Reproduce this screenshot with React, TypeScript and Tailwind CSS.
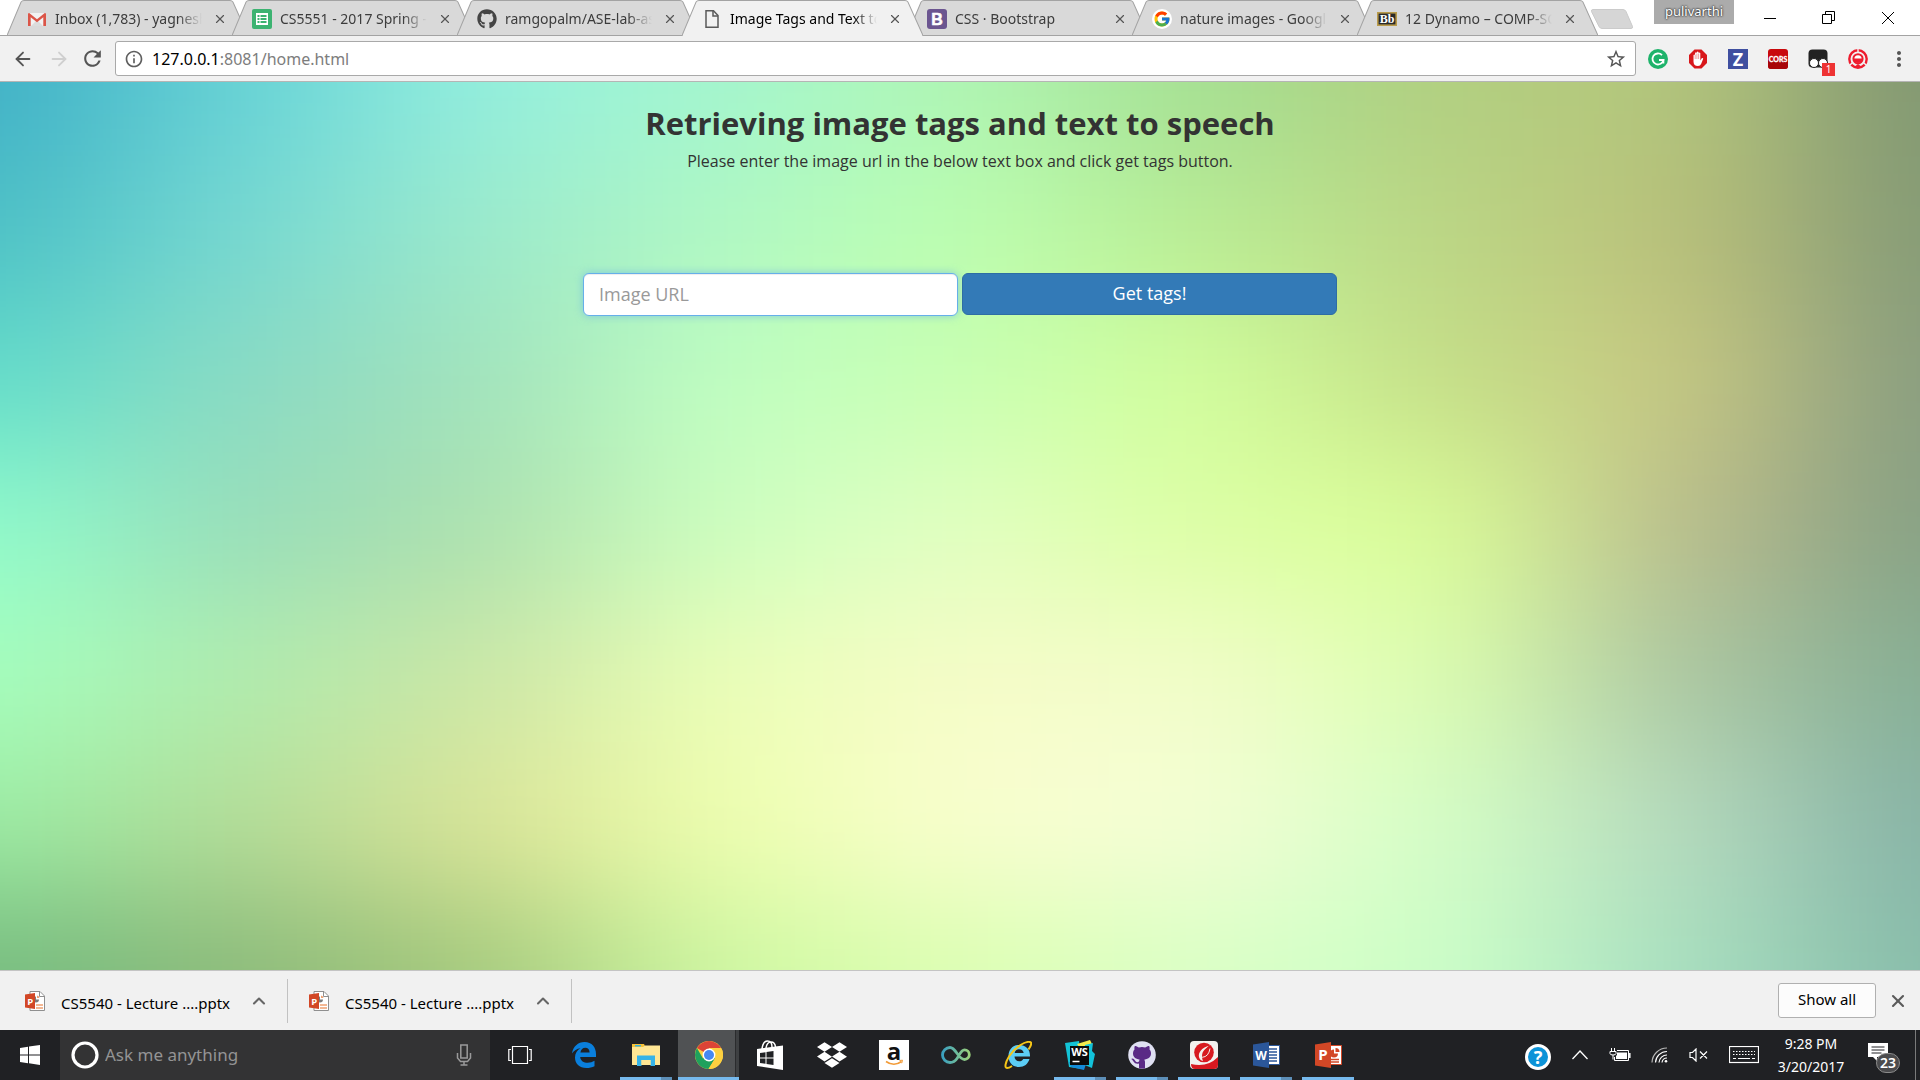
import type { ReactNode } from 'react';
import { ArrowLeft, ArrowRight, ChevronUp, X } from 'lucide-react';
import { FaDropbox, FaGithub } from 'react-icons/fa';
import { FcGoogle } from 'react-icons/fc';
import { MdRefresh, MdInfoOutline, MdStarBorder, MdMoreVert } from 'react-icons/md';

/* ---------- backdrop ---------- */

const MESH = [
  ['#40b0c6', '#66d2d6', '#94efdf', '#a4f6cf', '#b0f6b4', '#a4df92', '#b2cf80', '#b4c67c', '#809672'],
  ['#4cc0c6', '#76d8d2', '#9ceacc', '#b0f8c4', '#bcffb0', '#b8ec94', '#bcd685', '#bac07a', '#849a76'],
  ['#62dcca', '#8adac4', '#a2e2bc', '#c0ffc2', '#c8ffb2', '#d2ff9c', '#c4de88', '#c8c882', '#889c80'],
  ['#90fccc', '#98dcba', '#ace0ae', '#ccffc0', '#e2ffc2', '#dcffa4', '#daff98', '#bcbc8c', '#86a084'],
  ['#a6ffbe', '#b0ecae', '#cce6a6', '#ebffb8', '#f6fcc8', '#f2fdca', '#dcffb0', '#acc6a2', '#86ae94'],
  ['#9ceca4', '#b4dc98', '#dce498', '#eeffae', '#fafed0', '#f5fed6', '#d4ffc6', '#b6dabe', '#86b2a6'],
  ['#76bc80', '#8cba7a', '#a4c87c', '#cef8a2', '#dcffb2', '#daffc6', '#ccffc8', '#a8e0c0', '#88bcaa'],
];

function Backdrop() {
  return (
    <svg className="absolute inset-0 h-full w-full" viewBox="0 0 800 600" preserveAspectRatio="none" aria-hidden="true">
      <filter id="mesh" filterUnits="userSpaceOnUse" x="-250" y="-250" width="1300" height="1100" colorInterpolationFilters="sRGB">
        <feGaussianBlur stdDeviation="40" />
      </filter>
      <g filter="url(#mesh)">
        {MESH.map((row, r) =>
          row.map((fill, c) => {
            const x = c === 0 ? -250 : c * 100 - 50;
            const y = r === 0 ? -250 : r * 100 - 50;
            const right = c === 8 ? 1050 : c * 100 + 51;
            const bottom = r === 6 ? 850 : r * 100 + 51;
            return <rect key={`${r}-${c}`} x={x} y={y} width={right - x} height={bottom - y} fill={fill} />;
          }),
        )}
      </g>
    </svg>
  );
}

/* ---------- favicons ---------- */

const Gmail = () => (
  <svg viewBox="0 0 20 20" className="size-5">
    <rect x="1" y="4" width="18" height="13" rx="1" fill="#f2f2f2" />
    <path d="M4 17 10 11l6 6z" fill="#dcdcdc" />
    <path d="M1 17V5.200C1 4.500 1.500 4 2.200 4L10 10.300 17.800 4c.7 0 1.200.5 1.200 1.200V17h-2.700V8.300L10 13.300 3.700 8.300V17z" fill="#db5548" />
  </svg>
);

const Sheets = () => (
  <svg viewBox="0 0 20 20" className="size-5">
    <rect width="20" height="20" rx="2" fill="#3cb371" />
    <path d="M4 4h12v12H4z" fill="#fff" />
    <path d="M5.500 6h2v2h-2zM8.500 6h6v2h-6zM5.500 9h2v2h-2zM8.500 9h6v2h-6zM5.500 12h2v2h-2zM8.500 12h6v2h-6z" fill="#3cb371" />
  </svg>
);

const Page = () => (
  <svg viewBox="0 0 20 20" className="size-5" fill="none" stroke="#5a5a5a" strokeWidth="1.500">
    <path d="M4 1.800h7.500L16 6.500v11.700H4z" />
    <path d="M11 2v5h5" />
  </svg>
);

const Bootstrap = () => (
  <svg viewBox="0 0 20 20" className="size-5">
    <rect width="20" height="20" rx="3" fill="#6b5590" />
    <text x="10" y="15.800" textAnchor="middle" fontSize="16" fontWeight="700" fontFamily="Liberation Sans" fill="#fff" stroke="#fff" strokeWidth=".5">B</text>
  </svg>
);

const Google = () => (
  <span className="flex size-5 items-center justify-center rounded-full bg-white">
    <FcGoogle className="size-[18px]" />
  </span>
);

const Blackboard = () => (
  <svg viewBox="0 0 20 20" className="size-5">
    <rect x=".8" y="3.800" width="18.400" height="12.400" fill="#2a2a2a" stroke="#b99b4b" strokeWidth="1.600" />
    <text x="10" y="14.200" textAnchor="middle" fontSize="12" fontWeight="700" fontFamily="Liberation Serif" fill="#fff">Bb</text>
  </svg>
);

/* ---------- browser frame ---------- */

const TABS: { title: string; icon: ReactNode; active?: boolean }[] = [
  { title: 'Inbox (1,783) - yagnesh@gmail.com', icon: <Gmail /> },
  { title: 'CS5551 - 2017 Spring - Google Sheets', icon: <Sheets /> },
  { title: 'ramgopalm/ASE-lab-assignments', icon: <FaGithub className="size-5 text-[#444]" /> },
  { title: 'Image Tags and Text to Speech', icon: <Page />, active: true },
  { title: 'CSS · Bootstrap', icon: <Bootstrap /> },
  { title: 'nature images - Google Search', icon: <Google /> },
  { title: '12 Dynamo – COMP-SCI', icon: <Blackboard /> },
];

function Tab({ title, icon, active }: { title: string; icon: ReactNode; active?: boolean }) {
  const fill = active ? '#f1f1f1' : '#d9d9d9';
  return (
    <div className={active ? 'relative z-10 -mr-4 h-9 w-[241px] shrink' : 'relative -mr-4 h-9 w-[241px] shrink'}>
      <svg className="absolute inset-0 h-full w-full" viewBox="0 0 240 36" preserveAspectRatio="none" aria-hidden="true">
        <path d="M0 35.500 14 2Q15 .5 17 .5H222Q224 .5 225 2L240 35.500z" fill={fill} />
        <path d="M0 35.500 14 2Q15 .5 17 .5H222Q224 .5 225 2L240 35.500" fill="none" stroke="#a3a3a3" />
        {active ? <path d="M1 35.500H239" stroke="#f1f1f1" /> : <path d="M0 35.500H240" stroke="#a3a3a3" />}
      </svg>
      <div className="relative flex h-full items-center pt-0.5 pr-5 pl-5">
        {icon}
        <span
          className={
            (active ? 'text-black ' : 'text-[#3c3c3c] ') +
            'ml-2 min-w-0 flex-1 overflow-hidden text-sm whitespace-nowrap [mask-image:linear-gradient(to_right,black_calc(100%-24px),transparent)]'
          }
        >
          {title}
        </span>
        <button aria-label={`Close ${title}`} className="ml-2.5 flex size-4 items-center justify-center text-[#555]">
          <X className="size-3.5" strokeWidth={2} />
        </button>
      </div>
    </div>
  );
}

function TabStrip() {
  return (
    <div className="relative flex h-9 border-b border-[#a3a3a3] bg-white pl-[7px]">
      <div className="flex h-9 min-w-0">
        {TABS.map((t) => (
          <Tab key={t.title} {...t} />
        ))}
      </div>
      <button aria-label="New tab" className="mt-[9px] ml-2 h-5">
        <svg viewBox="0 0 44 20" className="h-5 w-11">
          <path d="M3 .5H33Q35 .5 36 2.500L42.500 17.500Q43 19.500 41 19.500H12Q10 19.500 9 17.500L1.500 2.500Q1 .5 3 .5z" fill="#d6d6d6" stroke="#cbcbcb" />
        </svg>
      </button>
      <div className="ml-auto flex">
        <span className="mr-3 flex h-6 w-20 items-center justify-center bg-[#ababab] text-[13px] text-white [text-shadow:0_0_2px_#222,0_0_2px_#222]">
          pulivarthi
        </span>
        <button aria-label="Minimize" className="flex w-12 items-center justify-center">
          <svg viewBox="0 0 12 12" className="size-3"><path d="M0 6.500h12" stroke="#000" /></svg>
        </button>
        <button aria-label="Restore" className="ml-2.5 flex w-12 items-center justify-center">
          <svg viewBox="0 0 13 13" className="size-[13px]" fill="none" stroke="#000">
            <path d="M.5 3.500h9v9h-9zM3.500 3V.5h9v9H10" />
          </svg>
        </button>
        <button aria-label="Close window" className="mr-2 ml-3 flex w-12 items-center justify-center">
          <svg viewBox="0 0 12 12" className="size-3"><path d="m0 0 12 12M12 0 0 12" stroke="#000" /></svg>
        </button>
      </div>
    </div>
  );
}

const Grammarly = () => (
  <svg viewBox="0 0 20 20" className="size-5" fill="none">
    <circle cx="10" cy="10" r="10" fill="#1eb36b" />
    <path d="M14 6.200A5.500 5.500 0 1 0 15.400 11H11" stroke="#fff" strokeWidth="1.800" />
    <path d="M15.500 10.500v4" stroke="#fff" strokeWidth="1.600" />
  </svg>
);

const AdBlock = () => (
  <svg viewBox="0 0 20 20" className="size-5">
    <path d="M6.500.5h7L19 6v8l-5.500 5.500h-7L1 14V6z" fill="#d8171b" />
    <path d="M5.500 12.500V6.200q.8-1.200 1.600 0V4q.9-1.300 1.700 0v-.8q.9-1.300 1.800 0V4q.9-1.200 1.700 0v7.500l1.400-2.300q1.400-.8 1.500.5l-2 5q-.8 2.300-3.200 2.300-4.500 0-4.500-4.500z" fill="#fff" />
    <path d="M7.200 6v4M8.900 4.500V10M10.600 4.500V10" stroke="#d8171b" strokeWidth=".4" />
  </svg>
);

const Zotero = () => (
  <svg viewBox="0 0 20 20" className="size-5">
    <rect width="20" height="20" fill="#3f4fa0" />
    <text x="10" y="16.500" textAnchor="middle" fontSize="18" fontWeight="700" fontFamily="Open Sans" fill="#fff">Z</text>
  </svg>
);

const Cors = () => (
  <svg viewBox="0 0 20 20" className="size-5">
    <rect width="20" height="20" rx="3" fill="#c9090c" />
    <path d="M0 11h20v6a3 3 0 0 1-3 3H3a3 3 0 0 1-3-3z" fill="#a80508" />
    <text x="10" y="13" textAnchor="middle" fontSize="7" fontWeight="700" fontFamily="Lato" fill="#fff" stroke="#fff" strokeWidth=".3">CORS</text>
  </svg>
);

const Monkey = () => (
  <span className="relative size-5">
    <svg viewBox="0 0 20 20" className="size-5">
      <rect x=".5" y=".5" width="19" height="18" rx="4" fill="#222" />
      <circle cx="6" cy="14" r="4.500" fill="#fff" stroke="#222" />
      <circle cx="15" cy="14" r="4.500" fill="#fff" stroke="#222" />
    </svg>
    <span className="absolute top-3.5 left-3.5 flex size-[13px] items-center justify-center bg-[#ee3333] text-[10px] text-white">1</span>
  </span>
);

const RedRing = () => (
  <svg viewBox="0 0 20 20" className="size-5" fill="none">
    <circle cx="10" cy="10" r="8.700" stroke="#ee1c2e" strokeWidth="2.400" />
    <path d="m2 16 4-4M18 16l-4-4M10 0v3" stroke="#f1f1f1" strokeWidth="1.400" />
    <circle cx="10" cy="9.800" r="4.600" fill="#fff" stroke="#ee1c2e" strokeWidth="2" />
    <path d="M5.500 9.500h9a4.500 4.500 0 0 1-9 0z" fill="#ee1c2e" />
    <path d="m6 18 4-3 4 3z" fill="#ee1c2e" />
  </svg>
);

function Toolbar() {
  return (
    <div className="flex h-[46px] items-center border-b border-[#b5b5b5] bg-[#f1f1f1] pr-[9px] pl-3">
      <button aria-label="Back" className="text-[#555]"><ArrowLeft className="size-[22px]" /></button>
      <button aria-label="Forward" className="ml-3.5 text-[#cfcfcf]"><ArrowRight className="size-[22px]" /></button>
      <button aria-label="Reload" className="ml-2.5 text-[#555]"><MdRefresh className="size-[25px]" /></button>
      <div className="ml-2.5 flex h-[35px] min-w-0 flex-1 items-center rounded-[3px] border border-[#a9a9a9] bg-white px-2">
        <MdInfoOutline className="size-5 text-[#5f5f5f]" />
        <a href="http://127.0.0.1:8081/home.html" className="ml-2 flex-1 text-base text-black">
          127.0.0.1<span className="text-[#7d7d7d]">:8081/home.html</span>
        </a>
        <button aria-label="Bookmark this page"><MdStarBorder className="size-[22px] text-[#555]" /></button>
      </div>
      <div className="ml-3 flex items-center gap-5">
        {[Grammarly, AdBlock, Zotero, Cors, Monkey, RedRing].map((Icon, i) => (
          <button key={i} aria-label={`Extension ${i + 1}`} className="flex"><Icon /></button>
        ))}
      </div>
      <button aria-label="Menu" className="ml-[19px] text-[#555]"><MdMoreVert className="size-6" /></button>
    </div>
  );
}

/* ---------- page ---------- */

function Content() {
  return (
    <main className="relative flex-1 overflow-hidden font-['Open_Sans',sans-serif] text-[#333]">
      <Backdrop />
      <div className="relative flex flex-col items-center pt-[23px]">
        <h1 className="text-[31px] leading-9 font-bold">Retrieving image tags and text to speech</h1>
        <p className="mt-2 text-base leading-6">Please enter the image url in the below text box and click get tags button.</p>
        <form className="mt-[100px] flex gap-1" onSubmit={(e) => e.preventDefault()}>
          <input
            type="text"
            aria-label="Image URL"
            placeholder="Image URL"
            className="h-[43px] w-[375px] rounded-md border border-[#66afe9] bg-white px-[15px] pb-0.5 text-lg shadow-[inset_0_1px_1px_rgba(0,0,0,.075),0_0_8px_rgba(102,175,233,.6)] outline-none placeholder:text-[#999]"
          />
          <button className="h-[42px] w-[375px] rounded-md border border-[#2e6da4] bg-[#337ab7] pb-0.5 text-lg text-white">Get tags!</button>
        </form>
      </div>
    </main>
  );
}

/* ---------- downloads ---------- */

const PptFile = () => (
  <svg viewBox="0 0 20 20" className="size-5">
    <path d="M5 .5h10L19.500 5v14.500H5z" fill="#fff" stroke="#8f8f8f" />
    <path d="M14.500.5V5.500h5" fill="none" stroke="#8f8f8f" />
    <path d="M11 5.500a3 3 0 1 0 3 3h-3z" fill="#7c7c7c" />
    <path d="M12 4.500a3 3 0 0 1 2.500 2.500H12z" fill="#f0a070" />
    <path d="M11 14h7M11 17h7" stroke="#f0a070" strokeWidth="1.300" />
    <path d="M0 3.500 10 2v16L0 16.500z" fill="#d24726" />
    <text x="5.200" y="13.500" textAnchor="middle" fontSize="9.500" fontWeight="700" fontFamily="Open Sans" fill="#fff">P</text>
  </svg>
);

function Download() {
  return (
    <div className="flex h-11 w-[284px] items-center border-r border-[#c2c2c2] pl-[21px] text-black">
      <PptFile />
      <a href="#download" className="mt-1.5 ml-4 w-[184px] text-[15px] whitespace-nowrap">CS5540 - Lecture ....pptx</a>
      <button aria-label="Download options" className="ml-1 text-[#666]">
        <ChevronUp className="size-5" strokeWidth={2.5} />
      </button>
    </div>
  );
}

function DownloadShelf() {
  return (
    <div className="flex h-[60px] items-center border-t border-[#c4c4c4] bg-[#f1f1f1] pl-1">
      <div className="flex">
        <Download />
        <Download />
      </div>
      <button className="ml-auto h-[35px] w-[98px] rounded-[3px] border border-[#b0b0b0] bg-[#fcfcfc] pb-0.5 text-[15px] text-black">Show all</button>
      <button aria-label="Close downloads" className="mr-3 ml-3 text-[#5a5a5a]"><X className="size-5" strokeWidth={2.5} /></button>
    </div>
  );
}

/* ---------- taskbar ---------- */

const Edge = () => (
  <svg viewBox="0 0 26 26" className="size-[26px]">
    <path d="M1 11.500C2 4.500 7 0 13.500 0 21 0 25 5.500 25 12v3H9.200c.3 4 3.600 5.800 7.400 5.800 2.700 0 4.900-.8 6.900-2v5.400c-2.300 1.200-5 1.800-8 1.800C8.200 26 4 21.500 4 15.500c0-4.200 2.200-7.400 5.600-9.200C5.800 6.700 3 8.500 1 11.500zM9.400 10.500h9.200c0-3-1.600-4.700-4.300-4.700-2.600 0-4.400 1.700-4.900 4.700z" fill="#0a7fdc" />
  </svg>
);

const Explorer = () => (
  <svg viewBox="0 0 28 24" className="h-6 w-7">
    <path d="M0 1h12l1.500 3H0z" fill="#f5c238" />
    <path d="M3 2h6v1.500H3z" fill="#38b1e0" />
    <path d="M0 4h11l2-1.500h15V22H0z" fill="#ffe694" />
    <path d="M5 23V12.500h18V23h-4.500v-6h-9v6z" fill="#36b3e8" />
    <path d="M9.500 17h9v5h-9z" fill="#ffe694" />
  </svg>
);

const Chrome = () => (
  <svg viewBox="0 0 28 28" className="size-7">
    <circle cx="14" cy="14" r="14" fill="#fdd040" />
    <path d="M14 14 1.900 7A14 14 0 0 1 26.100 7H14z" fill="#dc4436" />
    <path d="M1.900 7A14 14 0 0 0 13.500 28L20 17.500 14 14 8 17.500z" fill="#1fa15d" />
    <path d="M14 7h12.100A14 14 0 0 1 13.500 28L20 17.500z" fill="#fdd040" />
    <circle cx="14" cy="14" r="6.400" fill="#fff" />
    <circle cx="14" cy="14" r="5" fill="#4688f1" />
  </svg>
);

const Store = () => (
  <svg viewBox="0 0 28 30" className="h-[30px] w-7" fill="none">
    <path d="M6 9Q7 1 11.500 1T16 7M10 8Q11 2 15 2t4.500 5" stroke="#fff" strokeWidth="1.500" />
    <path d="M1 9 27 5.500V30L1 26z" fill="#fff" />
    <path d="m4 13 5.500-.8v5.300H4zM10.500 12l7-1v6.500h-7zM4 18.500h5.500v5.200L4 23zM10.500 18.500h7V25l-7-1z" fill="#202225" />
  </svg>
);

const Amazon = () => (
  <svg viewBox="0 0 30 30" className="size-[30px]">
    <rect width="30" height="30" fill="#fff" />
    <text x="15" y="20" textAnchor="middle" fontSize="24" fontWeight="700" fontFamily="Open Sans" fill="#111">a</text>
    <path d="M7 21.500q8 5.500 15.500 0" fill="none" stroke="#f29b38" strokeWidth="1.600" />
    <path d="m20.500 20.500 3-.3-.8 3" fill="none" stroke="#f29b38" />
  </svg>
);

const Loop = () => (
  <svg viewBox="0 0 30 18" className="h-[18px] w-[30px]" fill="none">
    <defs>
      <linearGradient id="loop"><stop stopColor="#3aa0c0" /><stop offset="1" stopColor="#9bd27c" /></linearGradient>
    </defs>
    <path d="M16 12.500C14 15.500 12 16.500 9 16.500A7.500 7.500 0 0 1 9 1.500C15 1.500 17 13.500 23.500 13.500a4.800 4.800 0 0 0 0-9.600C20 3.900 18.500 9 16 12.500z" stroke="url(#loop)" strokeWidth="2.800" />
  </svg>
);

const InternetExplorer = () => (
  <svg viewBox="0 0 28 28" className="size-7">
    <path d="M26 15.500H10.500c.2 3 2 4.800 4.700 4.800 2 0 3.200-.8 4-2.300h6.300C24 23 20.300 26 15 26 8.500 26 4.500 21.500 4.500 15S8.800 4 15.200 4C22 4 26.300 8.500 26 15.500zM10.700 11.900h9c-.4-2.300-2-3.700-4.400-3.700s-4.100 1.400-4.600 3.700z" fill="#5ccdf5" />
    <path d="M24.500 8.500C27.500 4 28 1.500 26 1 21.500 0 11 6 5 15.500 1 22 .5 27 3 27q2 0 5-2" fill="none" stroke="#f5c518" strokeWidth="2" />
  </svg>
);

const WebStorm = () => (
  <svg viewBox="0 0 30 30" className="size-[30px]">
    <path d="M0 3 14 1l3 28-13-2z" fill="#13c3d6" />
    <path d="m12 4 13-4 2 4-9 8z" fill="#f3ea4d" />
    <path d="m20 5 8-2-1 8 3 3-3 14-10-4z" fill="#12c2da" />
    <path d="m4 22 17 2-2 6L6 27z" fill="#148bd8" />
    <rect x="5" y="6" width="19" height="19" fill="#0b0b0b" />
    <text x="14.500" y="16" textAnchor="middle" fontSize="11" fontWeight="700" fontFamily="Open Sans" fill="#fff">WS</text>
    <path d="M7.500 21.500h7" stroke="#fff" strokeWidth="1.500" />
  </svg>
);

const GitHubDesktop = () => (
  <svg viewBox="0 0 28 28" className="size-7">
    <circle cx="14" cy="14" r="13.800" fill="#dfe0f2" />
    <path d="M11 27.500v-5q-4 .8-5.500-2T3 18q2.500-1.300 4 1.500t4 1q0-1 .8-1.800C7 18 5 15.500 5 12.500c0-1.700.5-3 1.500-4-.3-1.200-.2-2.300.3-3.500 1.500 0 2.800.6 4 1.500q3.200-.8 6.400 0c1.200-.9 2.500-1.500 4-1.500.5 1.200.6 2.300.3 3.500 1 1 1.500 2.300 1.500 4 0 3-2 5.500-6.800 6.200q.8.800.8 2v6.800z" fill="#5a2a86" />
  </svg>
);

const TrendMicro = () => (
  <svg viewBox="0 0 28 28" className="size-7">
    <rect width="28" height="28" rx="4" fill="#f3f1ef" />
    <path d="M1 23q16 4 27-7v8a4 4 0 0 1-4 4H5q-4 0-4-5z" fill="#d71920" />
    <circle cx="14" cy="11.500" r="9.800" fill="#d71920" />
    <path d="M19.500 4.500C12 6.500 8 11.500 9 16q.8 3.500 4 4-2-4 .5-8.500t6-7.500z" fill="#f3f1ef" />
    <path d="M18.800 5.800C14 8 11.200 12 12.500 16c4-1 6.800-5.500 6.300-10.200z" fill="#d71920" />
    <path d="M12.200 16.300q6.500-.5 7.800-8.800" fill="none" stroke="#f3f1ef" strokeWidth="1" />
  </svg>
);

const Word = () => (
  <svg viewBox="0 0 27 28" className="h-7 w-[27px]">
    <path d="M13 4.500h13.500v19H13z" fill="#fff" stroke="#2b579a" />
    <path d="M16 8h8M16 11h8M16 14h8M16 17h8M16 20h8" stroke="#2b579a" strokeWidth="1.400" />
    <path d="M0 3.500 16 1v26L0 24.500z" fill="#2b579a" />
    <text x="8" y="18.500" textAnchor="middle" fontSize="12" fontWeight="700" fontFamily="Open Sans" fill="#fff">W</text>
  </svg>
);

const PowerPoint = () => (
  <svg viewBox="0 0 27 28" className="h-7 w-[27px]">
    <path d="M13 4.500h13.500v19H13z" fill="#fff" stroke="#d24726" />
    <path d="M19 8.500a4 4 0 1 0 4 4h-4z" fill="#d24726" />
    <path d="M20.500 7a4 4 0 0 1 4 4h-4z" fill="#d24726" />
    <path d="M16 18.500h8M16 21h8" stroke="#d24726" strokeWidth="1.400" />
    <path d="M0 3.500 16 1v26L0 24.500z" fill="#d24726" />
    <text x="8" y="19" textAnchor="middle" fontSize="15" fontWeight="700" fontFamily="Open Sans" fill="#fff">P</text>
  </svg>
);

type Run = 'none' | 'single' | 'stack' | 'focus';
const APPS: { name: string; icon: ReactNode; run: Run }[] = [
  { name: 'Edge', icon: <Edge />, run: 'none' },
  { name: 'File Explorer', icon: <Explorer />, run: 'stack' },
  { name: 'Chrome', icon: <Chrome />, run: 'focus' },
  { name: 'Store', icon: <Store />, run: 'none' },
  { name: 'Dropbox', icon: <FaDropbox className="size-[30px] text-white" />, run: 'none' },
  { name: 'Amazon', icon: <Amazon />, run: 'none' },
  { name: 'Loop', icon: <Loop />, run: 'none' },
  { name: 'Internet Explorer', icon: <InternetExplorer />, run: 'none' },
  { name: 'WebStorm', icon: <WebStorm />, run: 'stack' },
  { name: 'GitHub', icon: <GitHubDesktop />, run: 'stack' },
  { name: 'Trend Micro', icon: <TrendMicro />, run: 'single' },
  { name: 'Word', icon: <Word />, run: 'stack' },
  { name: 'PowerPoint', icon: <PowerPoint />, run: 'single' },
];

function TaskButton({ name, icon, run }: { name: string; icon: ReactNode; run: Run }) {
  return (
    <button
      aria-label={name}
      className={
        run === 'focus'
          ? 'relative flex w-[62px] items-center justify-center border-l border-[#202225] bg-[#505254]'
          : 'relative flex w-[62px] items-center justify-center'
      }
    >
      {run === 'focus' && <span className="absolute inset-y-0 right-0 w-1 border-l border-[#2b2c2e] bg-[#3e4042]" />}
      {icon}
      {run === 'focus' && <span className="absolute inset-x-0 bottom-0 h-[3px] bg-[#76b9ed]" />}
      {run === 'single' && <span className="absolute inset-x-[5px] bottom-0 h-[3px] bg-[#76b9ed]" />}
      {run === 'stack' && (
        <span className="absolute inset-x-[5px] bottom-0 h-[3px] border-r-[11px] border-[#5d8fb8] bg-[#76b9ed]" />
      )}
    </button>
  );
}

function Taskbar() {
  return (
    <footer className="flex h-[50px] bg-[#202124] text-white">
      <button aria-label="Start" className="flex w-[60px] items-center justify-center">
        <svg viewBox="0 0 20 20" className="size-5" fill="#fff">
          <path d="M0 3 8 1.800V9.400H0zM9 1.600 20 0v9.400H9zM0 10.500h8v7.700L0 17zM9 10.500h11V20L9 18.300z" />
        </svg>
      </button>
      <div className="flex w-[430px] items-center bg-[#333334] pl-[11px]">
        <svg viewBox="0 0 28 28" className="size-7"><circle cx="14" cy="14" r="12" fill="none" stroke="#fff" strokeWidth="3.200" /></svg>
        <input
          type="text"
          aria-label="Ask me anything"
          placeholder="Ask me anything"
          className="ml-1.5 min-w-0 flex-1 bg-transparent text-[17px] outline-none placeholder:text-[#949494]"
        />
        <button aria-label="Voice search" className="mr-[18px]">
          <svg viewBox="0 0 16 22" className="h-[22px] w-4" fill="none" stroke="#9a9a9a" strokeWidth="1.500">
            <rect x="4.800" y="1" width="6.400" height="13" />
            <path d="M1.500 9v5l3 3.500h7l3-3.500V9M8 17.500V21M4.500 21h7" />
          </svg>
        </button>
      </div>
      <button aria-label="Task view" className="mr-[3px] flex w-[60px] items-center justify-center">
        <svg viewBox="0 0 24 20" className="h-5 w-6" fill="none" stroke="#fff" strokeWidth="1.200">
          <path d="M4.500 1.500h15v17h-15zM3 4.500H.8v11H3M21 4.500h2.200v11H21" />
        </svg>
      </button>
      {APPS.map((a) => (
        <TaskButton key={a.name} {...a} />
      ))}
      <div className="ml-auto flex items-center">
        <button aria-label="Help" className="mt-1 flex size-[26px] items-center justify-center rounded-full border-[3px] border-white bg-[#0c93d8] text-lg font-bold">?</button>
        <button aria-label="Show hidden icons" className="ml-[21px]">
          <svg viewBox="0 0 16 10" className="h-2.5 w-4" fill="none" stroke="#fff" strokeWidth="1.300"><path d="m.5 9 7.500-8 7.500 8" /></svg>
        </button>
        <button aria-label="Battery" className="ml-[21px]">
          <svg viewBox="0 0 22 14" className="h-3.5 w-[22px]" fill="none" stroke="#fff">
            <path d="M2.500 0v3M5.500 0v3M1 3.500h6v2q0 1.500-3 1.500T1 5.500zM4 7v4.500" />
            <path d="M8 2.500h11.500v10h-14V9" />
            <path d="M8 4.500h10v6.500H7V8q1.500-.5 1-3.500z" fill="#fff" stroke="none" />
            <path d="M20.800 5v5" strokeWidth="1.500" />
          </svg>
        </button>
        <button aria-label="Wi-Fi" className="ml-5">
          <svg viewBox="0 0 18 16" className="h-4 w-[18px]" fill="none" stroke="#fff" strokeWidth="1.200">
            <path d="M1 15.500A15 15 0 0 1 16 1" stroke="#b8b8b8" />
            <path d="M4.500 15.500A11.500 11.500 0 0 1 16 4.500M8 15.500a8 8 0 0 1 8-7.500M11 15.500a5 5 0 0 1 5-4.500" />
            <circle cx="15" cy="14.200" r="1.300" fill="#fff" stroke="none" />
          </svg>
        </button>
        <button aria-label="Volume muted" className="ml-5">
          <svg viewBox="0 0 20 14" className="h-3.5 w-5" fill="none" stroke="#fff" strokeWidth="1.200">
            <path d="M1 4.500h2.500L7 1v12L3.500 9.500H1zM11 3.500l7 7M18 3.500l-7 7" />
          </svg>
        </button>
        <button aria-label="Touch keyboard" className="ml-5">
          <svg viewBox="0 0 30 18" className="h-[18px] w-[30px]" fill="none" stroke="#fff">
            <rect x=".5" y=".5" width="29" height="16" strokeWidth="1.200" />
            <path d="M4 5.500h22M4 8.500h22" strokeDasharray="1.500 1.500" />
            <path d="M4 12.500h3M9 12.500h12M23 12.500h3" />
          </svg>
        </button>
        <time className="ml-3.5 w-[76px] text-center text-sm leading-[23px]">
          9:28 PM<br />3/20/2017
        </time>
        <button aria-label="Notifications" className="relative mr-[15px] ml-[19px] h-6 w-8">
          <svg viewBox="0 0 20 18" className="absolute top-0 left-0 h-[18px] w-5">
            <path d="M0 0h20v14H9v4l-4-4H0z" fill="#fff" />
            <path d="M3.500 4h13M3.500 7h13M3.500 10h10" stroke="#202124" />
          </svg>
          <span className="absolute top-2.5 left-2 flex h-5 w-6 items-center justify-center rounded-full border border-[#8a8a8a] bg-[#4b4b4d] text-sm font-semibold">23</span>
        </button>
        <span className="mr-1 h-[50px] w-px bg-[#7a7a7a]" />
      </div>
    </footer>
  );
}

export default function App() {
  return (
    <div className="flex h-screen flex-col overflow-hidden font-['Noto_Sans',sans-serif]">
      <header>
        <TabStrip />
        <Toolbar />
      </header>
      <Content />
      <DownloadShelf />
      <Taskbar />
    </div>
  );
}
